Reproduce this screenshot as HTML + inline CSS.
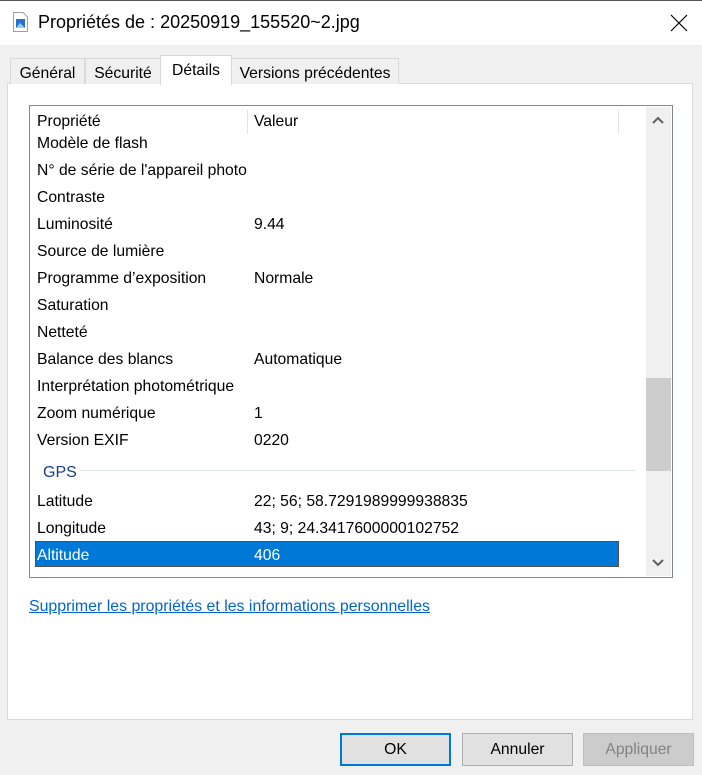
<!DOCTYPE html>
<html><head><meta charset="utf-8"><style>
*{margin:0;padding:0;box-sizing:border-box}
body{width:702px;height:775px;background:#f0f0f0;font-family:"Liberation Sans",sans-serif;font-size:15.7px;color:#000;position:relative;overflow:hidden}
.a{position:absolute;white-space:nowrap}
.title{left:0;top:0;width:702px;height:45px;background:#fff;border-top:1px solid #555}
.tab{top:58px;height:26px;border:1px solid #d9d9d9;border-bottom:none;background:#f0f0f0;padding:6px 0 0;text-align:center;font-size:15.7px}
.panel{left:7px;top:83px;width:686px;height:637px;background:#fff;border:1px solid #d9d9d9}
.list{left:29px;top:105px;width:644px;height:473px;border:1px solid #828790;background:#fff}
.r{position:absolute;left:7px;font-size:15.7px;margin-top:1px}
.v{position:absolute;left:224px;font-size:15.7px;margin-top:1px}
.btn{top:733px;width:111px;height:33px;border:1px solid #adadad;background:#e1e1e1;text-align:center;line-height:31px;font-size:15.7px}
</style></head><body>
<div class="a title"></div>
<svg class="a" style="left:13px;top:12px" width="15" height="20" viewBox="0 0 15 20"><path d="M0.5 0.5H10L14.5 5V19.5H0.5Z" fill="#fff" stroke="#a0a0a0"/><rect x="3" y="7" width="9" height="9" fill="#2a6fd0"/><path d="M3 16L7 11L12 16Z" fill="#8fd3ff"/></svg>
<div class="a" style="left:38px;top:12px;font-size:18px">Propriétés de : 20250919_155520~2.jpg</div>
<svg class="a" style="left:670px;top:14px" width="18" height="18"><path d="M1 1L17 17M17 1L1 17" stroke="#000" stroke-width="1.2"/></svg>
<div class="a panel"></div>
<div class="a tab" style="left:10px;width:75px">Général</div>
<div class="a tab" style="left:85px;width:76px">Sécurité</div>
<div class="a tab" style="left:231px;width:168px">Versions précédentes</div>
<div class="a tab" style="left:160px;top:55px;height:30px;width:72px;background:#fff;padding-top:6px">Détails</div>
<div class="a list">
<div class="r" style="top:6px">Propriété</div>
<div style="position:absolute;left:217px;top:4px;width:1px;height:24px;background:#e5e5e5"></div>
<div class="v" style="top:6px">Valeur</div>
<div style="position:absolute;left:588px;top:4px;width:1px;height:24px;background:#e5e5e5"></div>
<div class="r" style="top:28px">Modèle de flash</div>
<div class="r" style="top:55px">N° de série de l'appareil photo</div>
<div class="r" style="top:82px">Contraste</div>
<div class="r" style="top:109px">Luminosité</div><div class="v" style="top:109px">9.44</div>
<div class="r" style="top:136px">Source de lumière</div>
<div class="r" style="top:163px">Programme d’exposition</div><div class="v" style="top:163px">Normale</div>
<div class="r" style="top:190px">Saturation</div>
<div class="r" style="top:217px">Netteté</div>
<div class="r" style="top:244px">Balance des blancs</div><div class="v" style="top:244px">Automatique</div>
<div class="r" style="top:271px">Interprétation photométrique</div>
<div class="r" style="top:298px">Zoom numérique</div><div class="v" style="top:298px">1</div>
<div class="r" style="top:325px">Version EXIF</div><div class="v" style="top:325px">0220</div>
<div class="r" style="top:357px;left:13px;color:#1e3c8c;font-size:16px">GPS</div>
<div style="position:absolute;left:50px;top:364px;width:556px;height:1px;background:#dde3ea"></div>
<div class="r" style="top:386px">Latitude</div><div class="v" style="top:386px">22; 56; 58.7291989999938835</div>
<div class="r" style="top:413px">Longitude</div><div class="v" style="top:413px">43; 9; 24.3417600000102752</div>
<div style="position:absolute;left:5px;top:435px;width:584px;height:26px;background:#0078d7;border:1px dotted #444"></div>
<div class="r" style="top:440px;color:#fff">Altitude</div><div class="v" style="top:440px;color:#fff">406</div>
<div style="position:absolute;left:616px;top:1px;width:25px;height:469px;background:#f0f0f0"></div>
<div style="position:absolute;left:616px;top:272px;width:25px;height:93px;background:#cdcdcd"></div>
<svg style="position:absolute;left:621px;top:9px" width="14" height="10"><path d="M2 8L7 3L12 8" stroke="#606060" stroke-width="2" fill="none"/></svg>
<svg style="position:absolute;left:621px;top:452px" width="14" height="10"><path d="M2 2L7 7L12 2" stroke="#606060" stroke-width="2" fill="none"/></svg>
</div>
<div class="a" style="left:29px;top:598px;color:#0066cc;text-decoration:underline;font-size:15.9px">Supprimer les propriétés et les informations personnelles</div>
<div class="a btn" style="left:340px;border:2px solid #0078d7;line-height:29px">OK</div>
<div class="a btn" style="left:462px">Annuler</div>
<div class="a btn" style="left:583px;background:#cccccc;border-color:#bfbfbf;color:#838383">Appliquer</div>
</body></html>
